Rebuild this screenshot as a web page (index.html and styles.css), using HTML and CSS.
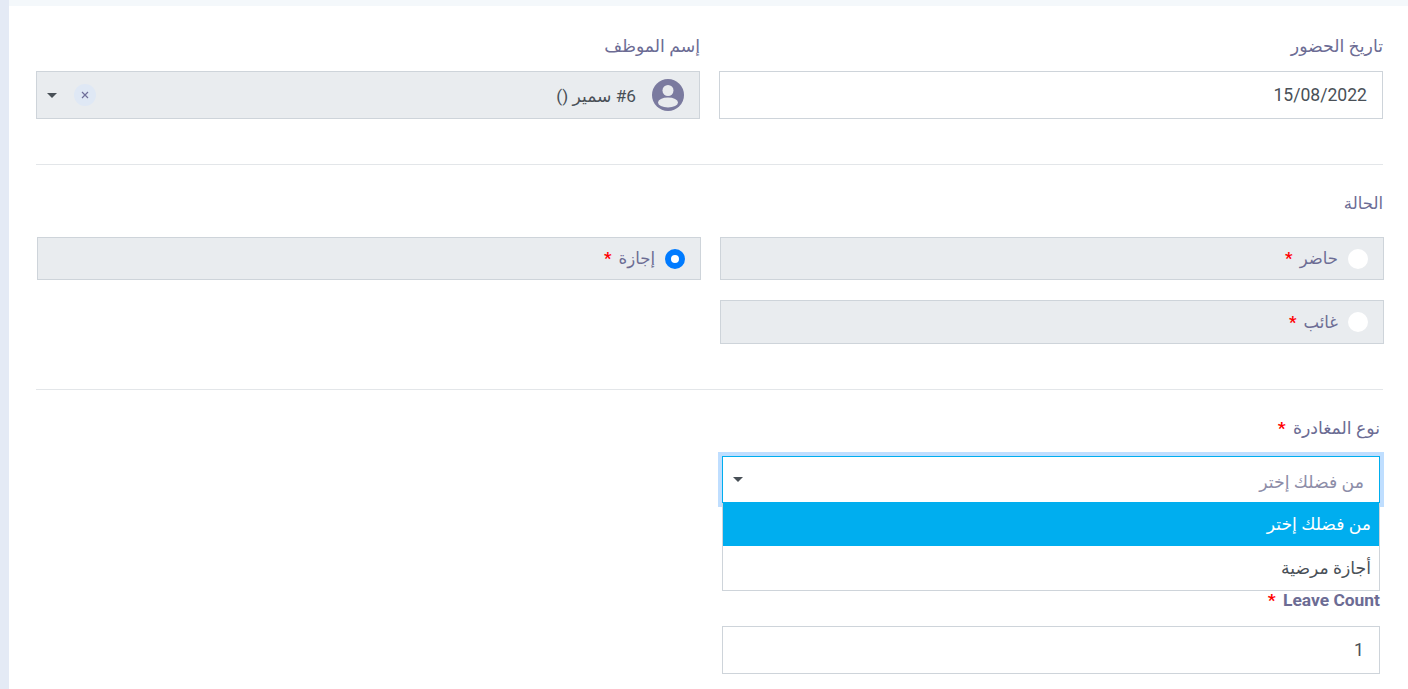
FILE: index.html
```html
<!DOCTYPE html>
<html lang="ar" dir="rtl">
<head>
<meta charset="utf-8">
<title>الحضور</title>
<link rel="stylesheet" href="styles.css">
</head>
<body>
<main class="page">
  <section class="two-col first">
    <div>
      <label class="label">تاريخ الحضور</label>
      <div class="field"><span class="date">15/08/2022</span></div>
    </div>
    <div>
      <label class="label">إسم الموظف</label>
      <div class="field disabled">
        <svg class="avatar" viewBox="0 0 32 32" aria-hidden="true">
          <circle cx="16" cy="16" r="16" fill="#7a7a9f"/>
          <circle cx="16" cy="11.5" r="5.5" fill="#e8ebee"/>
          <ellipse cx="16" cy="23.5" rx="10" ry="5" fill="#e8ebee"/>
        </svg>
        <span class="value">#6 سمير ()</span>
        <span class="spacer"></span>
        <span class="chip"><svg viewBox="0 0 8 8" aria-hidden="true"><path d="M1 1l6 6M7 1L1 7" stroke="#6f6f9a" stroke-width="1.2" fill="none"/></svg></span>
        <span class="caret caret-gap"></span>
      </div>
    </div>
  </section>
  <hr class="rule">
  <label class="label status-label">الحالة</label>
  <section class="radio-grid">
    <div class="radio-box"><span class="radio"></span><span class="radio-text">حاضر <b class="star">*</b></span></div>
    <div class="radio-box"><span class="radio checked"></span><span class="radio-text">إجازة <b class="star">*</b></span></div>
    <div class="radio-box tall"><span class="radio"></span><span class="radio-text">غائب <b class="star">*</b></span></div>
  </section>
  <hr class="rule rule-two">
  <section class="narrow">
    <label class="label">نوع المغادرة <b class="star">*</b></label>
    <div class="select-wrap">
      <div class="field focused">
        <span class="placeholder">من فضلك إختر</span>
        <span class="spacer"></span>
        <span class="caret"></span>
      </div>
      <ul class="menu">
        <li class="active">من فضلك إختر</li>
        <li>أجازة مرضية</li>
      </ul>
    </div>
    <label class="label latin">Leave Count <b class="star">*</b></label>
    <div class="field"><span class="date">1</span></div>
  </section>
</main>
</body>
</html>
```
FILE: styles.css
```css
* { box-sizing: border-box; }
html, body { margin: 0; height: 689px; overflow: hidden; }
body {
  background: #e4eaf5;
  font-family: Roboto, "Noto Sans", "DejaVu Sans", sans-serif;
  color: #495057;
}
.page {
  margin-left: 9px;
  height: 689px;
  background: #fff;
  border-top: 6px solid #f4f8fb;
  padding: 0 25px 0 27px;
}
.two-col {
  display: grid;
  grid-template-columns: 664px 664px;
  column-gap: 19px;
}
.first { padding-top: 30px; }
.label {
  display: block;
  height: 21px;
  line-height: 21px;
  margin-bottom: 14px;
  font-size: 17.3px;
  font-weight: 500;
  color: #6c6c94;
}
.field {
  display: flex;
  align-items: center;
  height: 48px;
  padding: 0 15px;
  background: #fff;
  border: 1px solid #ced4da;
}
.field.disabled { background: #e9ecef; }
.date { font-size: 17.6px; color: #495057; }
.avatar { width: 32px; height: 32px; flex: none; margin-left: 16px; }
.value { font-size: 17.2px; color: #495057; margin-top: 2px; }
.spacer { flex: 1; }
.chip {
  width: 22px;
  height: 22px;
  border-radius: 50%;
  background: #dfe8f5;
  display: flex;
  align-items: center;
  justify-content: center;
  margin-top: -1px;
  margin-left: 17px;
}
.chip svg { width: 8px; height: 8px; }
.caret {
  width: 0;
  height: 0;
  border-left: 5px solid transparent;
  border-right: 5px solid transparent;
  border-top: 5px solid #495057;
  margin-left: -5px;
}
.rule { margin: 45px 0 0; border: 0; border-top: 1px solid #e3e6e9; }
.status-label { margin-top: 28px; margin-bottom: 23px; font-size: 16.5px; }
.radio-grid {
  display: grid;
  grid-template-columns: 664px 664px;
  column-gap: 19px;
  row-gap: 20px;
  margin-right: -1px;
  margin-left: 1px;
}
.radio-box {
  display: flex;
  align-items: center;
  height: 43px;
  padding: 0 15px;
  background: #e9ecef;
  border: 1px solid #ced4da;
}
.radio-box.tall { height: 44px; }
.radio {
  width: 20px;
  height: 20px;
  border-radius: 50%;
  background: #fff;
  margin-left: 10px;
  flex: none;
}
.radio.checked { border: 6px solid #007bff; }
.radio-text { font-size: 16.5px; font-weight: 500; color: #6c6c94; }
.star { color: #f00; font-weight: 700; margin-right: 3px; }
.rule-two { margin-top: 45px; }
.narrow { width: 658px; margin-right: 3px; margin-top: 28px; }
.narrow .label { margin-bottom: 17px; }
.select-wrap { position: relative; margin-bottom: 87px; }
.focused {
  height: 47px;
  border-color: #00aeef;
  box-shadow: 0 0 0 4px #bfdeff;
}
.placeholder { font-size: 17.3px; color: #8d8da8; margin-top: 5px; }
.menu {
  position: absolute;
  top: 47px;
  left: 0;
  right: 0;
  margin: 0;
  padding: 0;
  list-style: none;
  background: #fff;
  border: 1px solid #ced4da;
  border-top: 0;
  font-size: 17.2px;
  color: #495057;
}
.menu li { height: 43px; line-height: 43px; padding: 0 8px; }
.menu li + li { height: 44px; line-height: 44px; }
.menu .active { background: #00aeef; color: #fff; }
.narrow .latin { font-size: 17.4px; font-weight: 700; margin-bottom: 15px; }
```
